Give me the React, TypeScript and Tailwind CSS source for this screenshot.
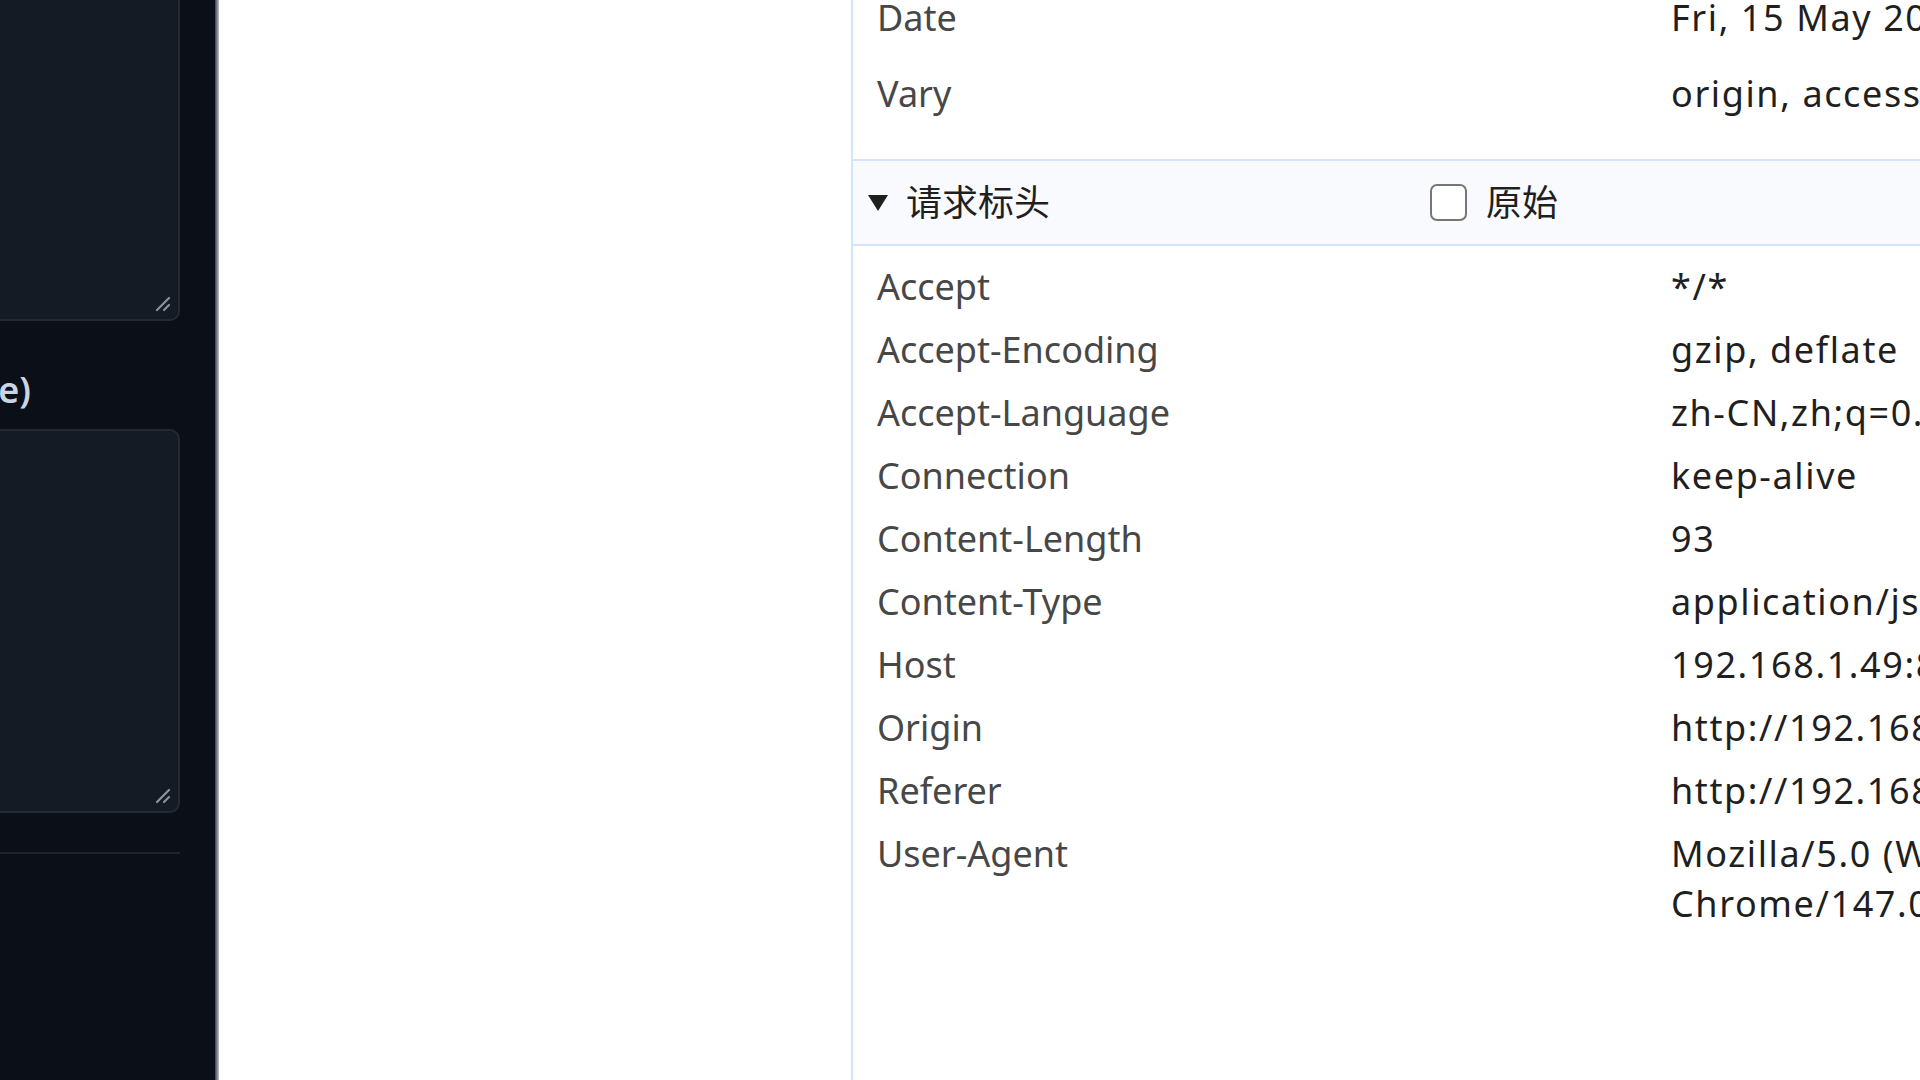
const REQUEST_HEADERS: { name: string; value: string[] }[] = [
  { name: 'Accept', value: ['*/*'] },
  { name: 'Accept-Encoding', value: ['gzip, deflate'] },
  { name: 'Accept-Language', value: ['zh-CN,zh;q=0.9,en;q=0.8'] },
  { name: 'Connection', value: ['keep-alive'] },
  { name: 'Content-Length', value: ['93'] },
  { name: 'Content-Type', value: ['application/json'] },
  { name: 'Host', value: ['192.168.1.49:8080'] },
  { name: 'Origin', value: ['http://192.168.1.49:8080'] },
  { name: 'Referer', value: ['http://192.168.1.49:8080/'] },
  {
    name: 'User-Agent',
    value: [
      'Mozilla/5.0 (Windows NT 10.0; Win64; x64) AppleWebKit/537.36 (KHTML, like Gecko)',
      'Chrome/147.0.0.0 Safari/537.36',
    ],
  },
];

const RESPONSE_TAIL: { name: string; value: string }[] = [
  { name: 'Date', value: 'Fri, 15 May 2026 08:12:40 GMT' },
  { name: 'Vary', value: 'origin, access-control-request-method, access-control-request-headers' },
];

function ResizeGrip() {
  return (
    <svg width="18" height="18" viewBox="0 0 18 18" className="shrink-0" aria-hidden>
      <path d="M3 15 L15 3" stroke="#8b949e" strokeWidth="2.2" strokeLinecap="round" />
      <path d="M10 15 L15 10" stroke="#8b949e" strokeWidth="2.2" strokeLinecap="round" />
    </svg>
  );
}

function DarkBox({ className }: { className: string }) {
  return (
    <div
      className={`flex items-end justify-end rounded-[10px] border-2 border-[#232a35] bg-[#151b25] p-[6px] ${className}`}
    >
      <ResizeGrip />
    </div>
  );
}

export default function App() {
  return (
    <div className="flex h-screen w-full overflow-hidden bg-white">
      {/* dark form column, scrolled so only its right edge shows */}
      <aside className="flex h-full w-[215px] shrink-0 justify-end overflow-hidden bg-[#0b0f17] pr-[35px]">
        <div className="flex w-[600px] shrink-0 flex-col">
          <DarkBox className="-mt-[20px] h-[341px]" />
          <div className="mt-[45px] flex justify-end pr-[149px] font-['Noto_Sans',sans-serif] text-[36px] leading-[48px] font-semibold whitespace-nowrap text-[#c9d5e3]">
            Request Body (optional override)
          </div>
          <DarkBox className="mt-[15px] h-[384px]" />
          <div className="mt-[39px] h-[2px] bg-[#1d232d]" />
        </div>
      </aside>
      <div className="w-[4px] shrink-0 bg-gradient-to-r from-[#3a3f48] to-[#c4c7cc]" />

      <div className="w-[632px] shrink-0" />

      {/* devtools headers pane */}
      <section className="min-w-0 flex-1 overflow-hidden border-l-2 border-[#d3e3fd] font-['Noto_Sans','Noto_Sans_CJK_SC',sans-serif] text-[36px]">
        <div className="-mt-[20px] pb-[27px] pl-[24px]">
          {RESPONSE_TAIL.map((h) => (
            <div key={h.name} className="grid grid-cols-[794px_auto] py-[13px] leading-[50px]">
              <div className="text-[#474747]">{h.name}</div>
              <div className="whitespace-nowrap tracking-[1.6px] text-[#1f1f1f]">{h.value}</div>
            </div>
          ))}
        </div>

        <div className="flex h-[87px] items-center border-y-2 border-[#d3e3fd] bg-[#f8fafd]">
          <div className="flex w-[577px] shrink-0 items-center pl-[14px]">
            <svg width="22" height="18" viewBox="0 0 22 18" aria-hidden>
              <path d="M1 1 H21 L11 17 Z" fill="#1f1f1f" />
            </svg>
            <span className="ml-[17px] text-[#1f1f1f]">请求标头</span>
          </div>
          <span className="h-[37px] w-[37px] shrink-0 rounded-[7px] border-[2.5px] border-[#767676] bg-white" />
          <span className="ml-[19px] text-[#1f1f1f]">原始</span>
        </div>

        <div className="pt-[9px] pl-[24px]">
          {REQUEST_HEADERS.map((h) => (
            <div key={h.name} className="grid grid-cols-[794px_auto] py-[6.5px] leading-[50px]">
              <div className="text-[#474747]">{h.name}</div>
              <div className="tracking-[1.6px] text-[#1f1f1f]">
                {h.value.map((line) => (
                  <div key={line} className="whitespace-nowrap">
                    {line}
                  </div>
                ))}
              </div>
            </div>
          ))}
        </div>
      </section>
    </div>
  );
}
